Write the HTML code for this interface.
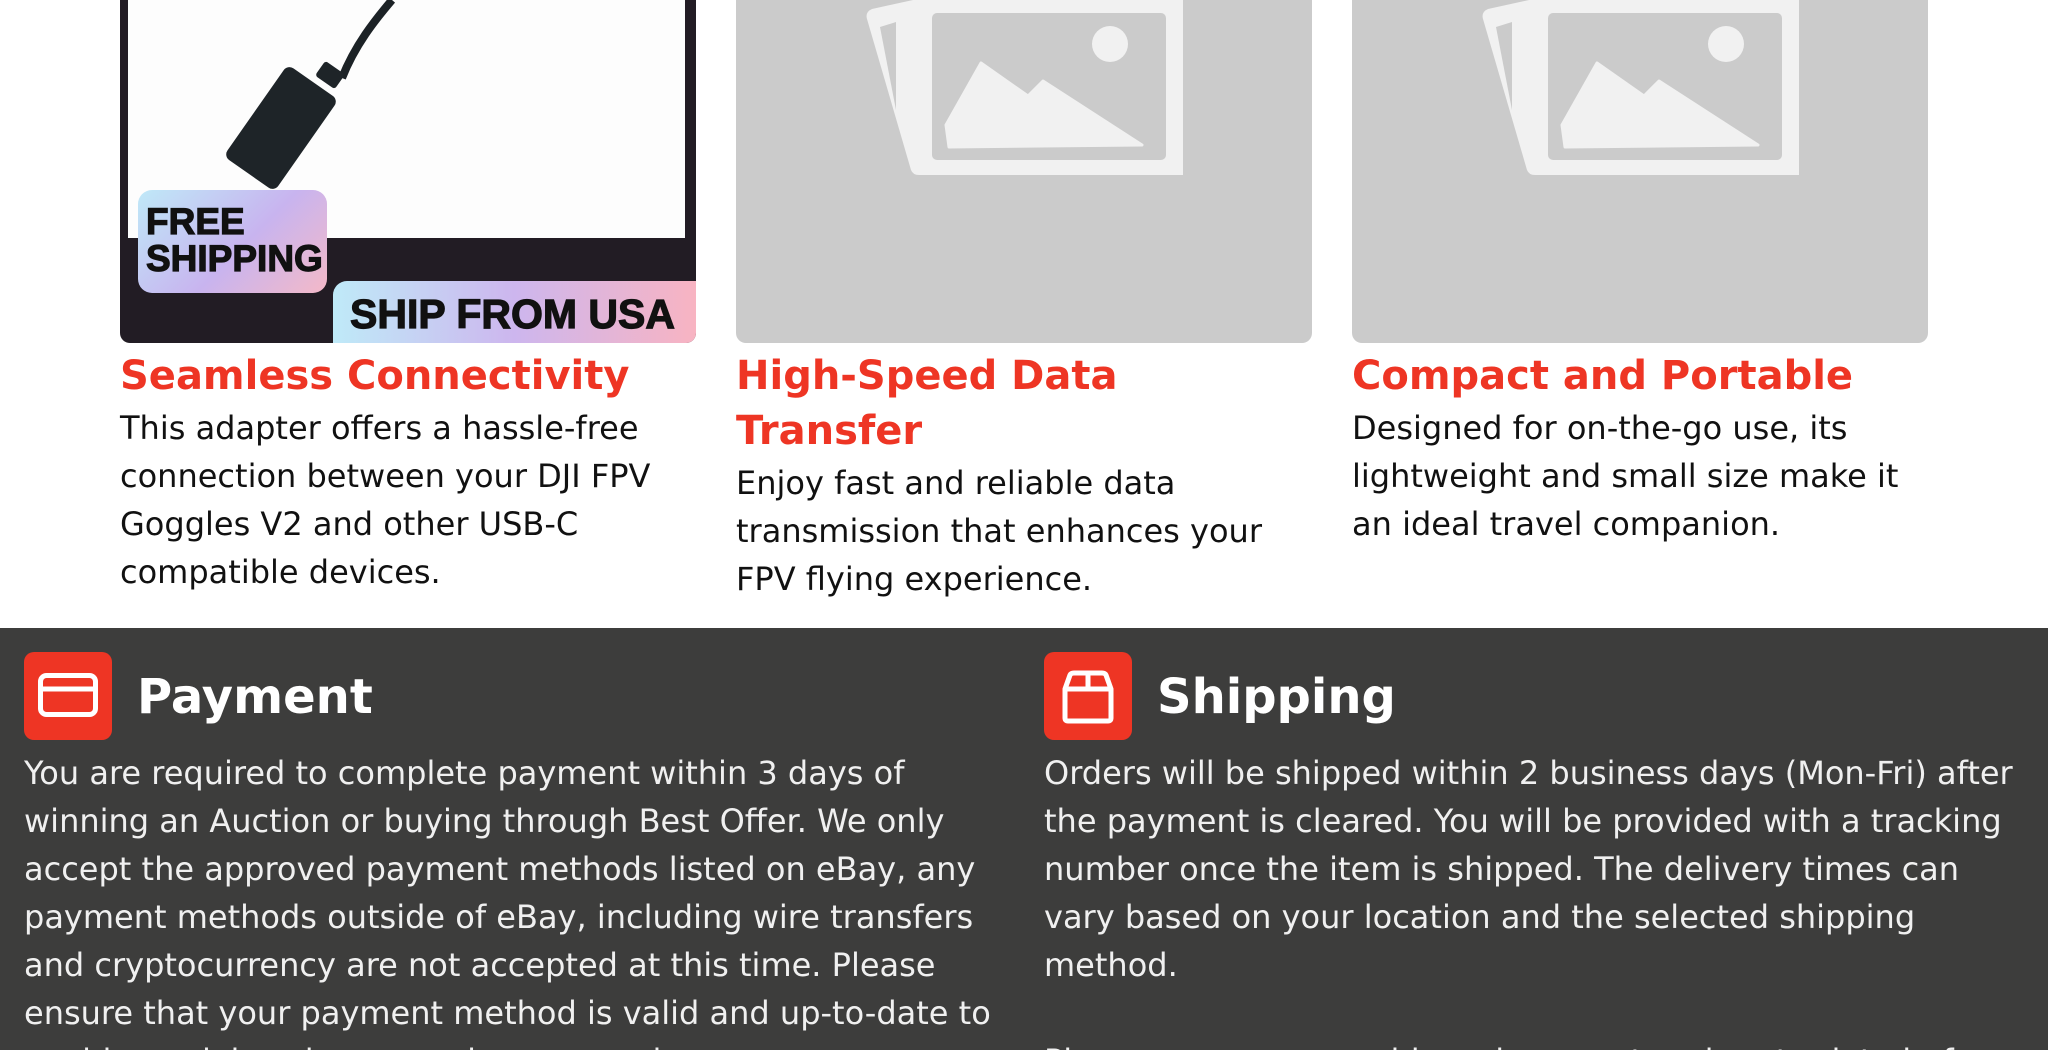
<!DOCTYPE html>
<html><head><meta charset="utf-8"><style>
*{margin:0;padding:0;box-sizing:border-box}
html,body{width:2048px;height:1050px;overflow:hidden;background:#fff;font-family:"DejaVu Sans","Liberation Sans",sans-serif}
.card{position:absolute;top:0;width:576px}
.img{position:absolute;left:0;top:0;width:576px;height:343px;border-radius:0 0 10px 10px;overflow:hidden}
.ph{background:#cbcbcb}
.t{position:absolute;left:0;top:349px;font-weight:bold;color:#ee3524;font-size:40px;line-height:55px;white-space:nowrap}
.b{position:absolute;left:0;font-size:32px;line-height:48px;color:#111;white-space:nowrap}
.dark{position:absolute;left:0;top:628px;width:2048px;height:422px;background:#3d3d3c;overflow:hidden}
.ib{position:absolute;width:88px;height:88px;border-radius:10px;background:#ee3524}
.h{position:absolute;font-weight:bold;font-size:48px;color:#fff;white-space:nowrap;line-height:56px}
.p{position:absolute;font-size:32px;line-height:48px;color:#f0f0f0;white-space:nowrap}
.bd{font-family:'Liberation Sans',sans-serif;font-weight:bold;color:#111;-webkit-text-stroke:1.2px #111}
</style></head><body>

<div class="card" style="left:120px">
 <div class="img" style="background:#221c24">
  <div style="position:absolute;left:8px;top:0;width:557px;height:238px;background:#fdfdfd"></div>
  <svg style="position:absolute;left:0;top:0" width="576" height="343">
   <path d="M272 0 C255 20 235 45 222 78" stroke="#1c2226" stroke-width="8" fill="none"/>
   <rect x="130" y="72" width="62" height="112" rx="7" fill="#1e2428" transform="rotate(35 161 128)"/>
   <rect x="198" y="66" width="24" height="18" rx="3" fill="#1e2428" transform="rotate(35 210 75)"/>
  </svg>
  <div style="position:absolute;left:18px;top:190px;width:189px;height:103px;border-radius:14px;background:linear-gradient(135deg,#bfe9f8,#c8b4ef 55%,#f4b9c8);"></div>
  <div class="bd" style="position:absolute;left:26px;top:203px;font-size:37px;line-height:37px;">FREE<br>SHIPPING</div>
  <div style="position:absolute;left:213px;top:281px;width:363px;height:62px;border-radius:14px 0 0 0;background:linear-gradient(90deg,#bfeaf8,#cdb6ee 50%,#f8b4c2)"></div>
  <div class="bd" style="position:absolute;left:230px;top:292px;font-size:41px;line-height:44px;white-space:nowrap">SHIP FROM USA</div>
 </div>
 <div class="t">Seamless Connectivity</div>
 <div class="b" style="top:404px">This adapter offers a hassle-free<br>connection between your DJI FPV<br>Goggles V2 and other USB-C<br>compatible devices.</div>
</div>

<div class="card" style="left:736px">
 <div class="img ph"><svg width="576" height="343">
  <path d="M177 0 L136 9 Q129 12 131 19 L175 170 Q177 175 183 175 L447 175 L447 0 Z" fill="#f1f1f1"/>
  <path d="M144 27 L160 22 L160 110 Z" fill="#cbcbcb"/>
  <rect x="196" y="13" width="234" height="147" rx="5" fill="#cbcbcb"/>
  <circle cx="374" cy="44" r="18" fill="#f1f1f1"/>
  <path d="M213 147 L210 125 L245 63 L292 96 L307 81 L406 145 Z" fill="#f1f1f1" stroke="#f1f1f1" stroke-width="3" stroke-linejoin="round"/>
 </svg></div>
 <div class="t">High-Speed Data<br>Transfer</div>
 <div class="b" style="top:459px">Enjoy fast and reliable data<br>transmission that enhances your<br>FPV flying experience.</div>
</div>

<div class="card" style="left:1352px">
 <div class="img ph"><svg width="576" height="343">
  <path d="M177 0 L136 9 Q129 12 131 19 L175 170 Q177 175 183 175 L447 175 L447 0 Z" fill="#f1f1f1"/>
  <path d="M144 27 L160 22 L160 110 Z" fill="#cbcbcb"/>
  <rect x="196" y="13" width="234" height="147" rx="5" fill="#cbcbcb"/>
  <circle cx="374" cy="44" r="18" fill="#f1f1f1"/>
  <path d="M213 147 L210 125 L245 63 L292 96 L307 81 L406 145 Z" fill="#f1f1f1" stroke="#f1f1f1" stroke-width="3" stroke-linejoin="round"/>
 </svg></div>
 <div class="t">Compact and Portable</div>
 <div class="b" style="top:404px">Designed for on-the-go use, its<br>lightweight and small size make it<br>an ideal travel companion.</div>
</div>

<div class="dark">
 <div class="ib" style="left:24px;top:24px"><svg width="88" height="88">
  <rect x="16.5" y="23.5" width="55" height="39" rx="6" fill="none" stroke="#fff" stroke-width="5"/>
  <line x1="16" y1="37" x2="72" y2="37" stroke="#fff" stroke-width="5"/>
 </svg></div>
 <div class="h" style="left:137px;top:41px">Payment</div>
 <div class="p" style="left:24px;top:121px">You are required to complete payment within 3 days of<br>winning an Auction or buying through Best Offer. We only<br>accept the approved payment methods listed on eBay, any<br>payment methods outside of eBay, including wire transfers<br>and cryptocurrency are not accepted at this time. Please<br>ensure that your payment method is valid and up-to-date to<br>avoid any delays in processing your order.</div>

 <div class="ib" style="left:1044px;top:24px"><svg width="88" height="88">
  <path d="M21 37 L26 23 Q27 21 30 21 L58 21 Q61 21 62 23 L67 37 L67 66 Q67 69 64 69 L24 69 Q21 69 21 66 Z M21 37 L67 37 M44 21 L44 37" fill="none" stroke="#fff" stroke-width="5" stroke-linejoin="round"/>
 </svg></div>
 <div class="h" style="left:1157px;top:41px">Shipping</div>
 <div class="p" style="left:1044px;top:121px">Orders will be shipped within 2 business days (Mon-Fri) after<br>the payment is cleared. You will be provided with a tracking<br>number once the item is shipped. The delivery times can<br>vary based on your location and the selected shipping<br>method.<br><br>Please ensure your address is correct and up-to-date before</div>
</div>
</body></html>
